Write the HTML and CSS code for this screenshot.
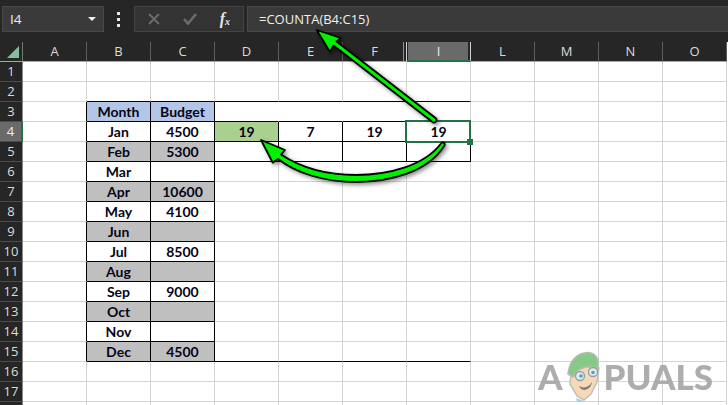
FILE: index.html
```html
<!DOCTYPE html>
<html lang="en">
<head>
<meta charset="utf-8">
<title>Excel COUNTA</title>
<link rel="stylesheet" href="styles.css">
</head>
<body>
<div class="app">
  <div class="fbar">
    <div class="namebox"><span>I4</span><i class="caret"></i></div>
    <div class="kebab"><i></i><i></i><i></i></div>
    <div class="btns">
      <svg class="ico" width="14" height="14" viewBox="0 0 14 14"><path d="M2 2L12 12M12 2L2 12" stroke="#6b6b6b" stroke-width="2" fill="none"/></svg>
      <svg class="ico" width="16" height="14" viewBox="0 0 16 14"><path d="M2 7L6 11.500L14 2" stroke="#6b6b6b" stroke-width="2.600" fill="none"/></svg>
      <span class="fx">f<sub>x</sub></span>
    </div>
    <div class="formula">=COUNTA(B4:C15)</div>
  </div>
  <div class="sheet">
    <div class="ch corner"><svg width="12" height="12" viewBox="0 0 12 12"><path d="M12 0V12H0Z" fill="#86bd9f"/></svg></div>
    <div class="ch">A</div><div class="ch">B</div><div class="ch">C</div><div class="ch">D</div><div class="ch">E</div><div class="ch before">F</div><div class="ch sel">I</div><div class="ch">L</div><div class="ch">M</div><div class="ch">N</div><div class="ch">O</div>

    <div class="rh">1</div><div class="c"></div><div class="c"></div><div class="c"></div><div class="c"></div><div class="c"></div><div class="c"></div><div class="c"></div><div class="c"></div><div class="c"></div><div class="c"></div><div class="c"></div>
    <div class="rh">2</div><div class="c"></div><div class="c bb"></div><div class="c bb"></div><div class="c bb"></div><div class="c bb"></div><div class="c bb"></div><div class="c bb"></div><div class="c"></div><div class="c"></div><div class="c"></div><div class="c"></div>
    <div class="rh">3</div><div class="c br"></div><div class="c t blue">Month</div><div class="c t blue">Budget</div><div class="c bb nr"></div><div class="c bb nr"></div><div class="c bb nr"></div><div class="c bb"></div><div class="c"></div><div class="c"></div><div class="c"></div><div class="c"></div>
    <div class="rh on">4</div><div class="c br"></div><div class="c t">Jan</div><div class="c t">4500</div><div class="c t green">19</div><div class="c t">7</div><div class="c t">19</div><div class="c t">19</div><div class="c"></div><div class="c"></div><div class="c"></div><div class="c"></div>
    <div class="rh">5</div><div class="c br"></div><div class="c t grey">Feb</div><div class="c t grey">5300</div><div class="c t"></div><div class="c t"></div><div class="c t"></div><div class="c t"></div><div class="c"></div><div class="c"></div><div class="c"></div><div class="c"></div>
    <div class="rh">6</div><div class="c br"></div><div class="c t">Mar</div><div class="c t"></div><div class="c"></div><div class="c"></div><div class="c"></div><div class="c"></div><div class="c"></div><div class="c"></div><div class="c"></div><div class="c"></div>
    <div class="rh">7</div><div class="c br"></div><div class="c t grey">Apr</div><div class="c t grey">10600</div><div class="c"></div><div class="c"></div><div class="c"></div><div class="c"></div><div class="c"></div><div class="c"></div><div class="c"></div><div class="c"></div>
    <div class="rh">8</div><div class="c br"></div><div class="c t">May</div><div class="c t">4100</div><div class="c"></div><div class="c"></div><div class="c"></div><div class="c"></div><div class="c"></div><div class="c"></div><div class="c"></div><div class="c"></div>
    <div class="rh">9</div><div class="c br"></div><div class="c t grey">Jun</div><div class="c t grey"></div><div class="c"></div><div class="c"></div><div class="c"></div><div class="c"></div><div class="c"></div><div class="c"></div><div class="c"></div><div class="c"></div>
    <div class="rh">10</div><div class="c br"></div><div class="c t">Jul</div><div class="c t">8500</div><div class="c"></div><div class="c"></div><div class="c"></div><div class="c"></div><div class="c"></div><div class="c"></div><div class="c"></div><div class="c"></div>
    <div class="rh">11</div><div class="c br"></div><div class="c t grey">Aug</div><div class="c t grey"></div><div class="c"></div><div class="c"></div><div class="c"></div><div class="c"></div><div class="c"></div><div class="c"></div><div class="c"></div><div class="c"></div>
    <div class="rh">12</div><div class="c br"></div><div class="c t">Sep</div><div class="c t">9000</div><div class="c"></div><div class="c"></div><div class="c"></div><div class="c"></div><div class="c"></div><div class="c"></div><div class="c"></div><div class="c"></div>
    <div class="rh">13</div><div class="c br"></div><div class="c t grey">Oct</div><div class="c t grey"></div><div class="c"></div><div class="c"></div><div class="c"></div><div class="c"></div><div class="c"></div><div class="c"></div><div class="c"></div><div class="c"></div>
    <div class="rh">14</div><div class="c br"></div><div class="c t">Nov</div><div class="c t"></div><div class="c"></div><div class="c"></div><div class="c"></div><div class="c"></div><div class="c"></div><div class="c"></div><div class="c"></div><div class="c"></div>
    <div class="rh">15</div><div class="c br"></div><div class="c t grey">Dec</div><div class="c t grey">4500</div><div class="c bb"></div><div class="c bb"></div><div class="c bb"></div><div class="c bb"></div><div class="c"></div><div class="c"></div><div class="c"></div><div class="c"></div>
    <div class="rh">16</div><div class="c"></div><div class="c"></div><div class="c"></div><div class="c"></div><div class="c"></div><div class="c"></div><div class="c"></div><div class="c"></div><div class="c"></div><div class="c"></div><div class="c"></div>
    <div class="rh">17</div><div class="c"></div><div class="c"></div><div class="c"></div><div class="c"></div><div class="c"></div><div class="c"></div><div class="c"></div><div class="c"></div><div class="c"></div><div class="c"></div><div class="c"></div>
    <div class="rh"></div><div class="c"></div><div class="c"></div><div class="c"></div><div class="c"></div><div class="c"></div><div class="c"></div><div class="c"></div><div class="c"></div><div class="c"></div><div class="c"></div><div class="c"></div>
  </div>

  <div class="cursor"><i class="handle"></i></div>

  <div class="logo">
    <span class="la">A</span>
    <svg class="mascot" width="40" height="52" viewBox="0 0 40 52">
      <path d="M7 22L6 34L13 46L20 50L27 44L33 32L35 18L20 16Z" fill="#f8d8b4" stroke="#bdbdbd" stroke-width="1.500"/>
      <path d="M4 24C5 14 10 5 20 3C27 1 33 5 34 11L34 19L28 17L21 17L14 20L9 27Z" fill="#7fc87f" stroke="#b5b5b5" stroke-width="1.500"/>
      <circle cx="16" cy="26" r="4.500" fill="#d8ecf4" stroke="#8c9aa0" stroke-width="1.300"/>
      <circle cx="29" cy="22" r="4.500" fill="#d8ecf4" stroke="#8c9aa0" stroke-width="1.300"/>
      <circle cx="17" cy="26" r="1.800" fill="#5b98b5"/>
      <circle cx="29" cy="22.500" r="1.800" fill="#5b98b5"/>
      <path d="M15 36C20 39 25 37 28 32C27 40 18 43 15 36Z" fill="#777"/>
      <path d="M12 48L20 51L17 52L13 52Z" fill="#9fd0e6"/>
    </svg>
    <span class="lp">PUALS</span>
  </div>

  <svg class="arrows" width="728" height="405" viewBox="0 0 728 405">
    <defs><filter id="sh" x="-20%" y="-20%" width="140%" height="140%"><feDropShadow dx="2" dy="2" stdDeviation="2" flood-color="#000" flood-opacity=".45"/></filter></defs>
    <g filter="url(#sh)" stroke="#000" stroke-width="1.800" stroke-linejoin="round">
      <path d="M316.700 30L340.700 38L336.500 41.500L435.500 118A2.500 2.500 0 0 1 432.500 122L333.500 45.500L330 52Z" fill="#00f000"/>
      <path d="M261 140L285 150L281 154.500C303 169 327 175 356 175C388 175 424 166 441 143.500A2 2 0 0 1 444.500 145.500C428 172 390 182 356 182C324 182 296 173 278 159L272.700 162.700Z" fill="#00f000"/>
    </g>
  </svg>
</div>
</body>
</html>
```
FILE: styles.css
```css
* { box-sizing: border-box; }
html, body { margin: 0; padding: 0; width: 728px; height: 405px; overflow: hidden; }
.app { position: relative; width: 728px; height: 405px; background: #262626; font-family: "Open Sans", "Noto Sans", sans-serif; overflow: hidden; }

.fbar { height: 42px; padding: 6px 0 0 2px; display: flex; align-items: flex-start; }
.namebox { width: 102px; height: 26px; background: #3a3a3a; border: 1px solid #484848; color: #f0f0f0; font-size: 13.500px; display: flex; align-items: center; justify-content: space-between; padding: 0 7px 0 7px; }
.caret { width: 0; height: 0; border-left: 4px solid transparent; border-right: 4px solid transparent; border-top: 4px solid #f0f0f0; }
.kebab { width: 30px; height: 26px; display: flex; flex-direction: column; align-items: center; justify-content: center; gap: 3px; padding-right: 1px; }
.kebab i { width: 3px; height: 3px; background: #e8e8e8; }
.btns { width: 110px; height: 26px; background: #333; border: 1px solid #444; display: flex; align-items: center; justify-content: space-between; padding: 0 13px 0 12px; }
.fx { font-family: "Liberation Serif", serif; font-style: italic; font-weight: 700; font-size: 16px; color: #e6e6e6; line-height: 1; }
.fx sub { font-size: 10px; vertical-align: -1px; line-height: 0; }
.formula { flex: 1; height: 26px; margin-left: 3px; background: #3a3a3a; border-top: 1px solid #484848; border-bottom: 1px solid #484848; border-left: 1px solid #484848; color: #f0f0f0; font-size: 13px; line-height: 24px; padding-left: 11px; }

.sheet { display: grid; grid-template-columns: 23px repeat(11, 64px); grid-auto-rows: 20px; background: #fff; height: 363px; color: #000; }
.ch { background: #262626; color: #dcdcdc; font-size: 13px; text-align: center; line-height: 18px; border-right: 1px solid #5c5c5c; border-bottom: 1px solid #a8a8a8; }
.corner { display: flex; align-items: flex-end; justify-content: flex-end; padding: 0 3px 3px 0; border-right-color: #777; }
.before { border-right: 1px solid #cfcfcf; box-shadow: inset -2px 0 0 #262626, inset -3px 0 0 #8f8f8f; }
.sel { background: #6a6a6a; color: #eee; border-right: 1px solid #cfcfcf; border-bottom: 2px solid #217346; box-shadow: inset 1px 0 0 #262626, inset -2px 0 0 #262626; }
.rh { background: #262626; color: #dcdcdc; font-size: 13px; line-height: 19px; text-align: center; border-right: 1px solid #8a8a8a; border-bottom: 1px solid #4c4c4c; }
.on { background: #6a6a6a; color: #eee; border-right: 2px solid #217346; }
.c { border-right: 1px solid #d4d4d4; border-bottom: 1px solid #d4d4d4; }
.br { border-right-color: #000; }
.bb { border-bottom-color: #000; }
.nr { border-right-color: transparent; }
.t { border-right-color: #000; border-bottom-color: #000; font-family: "Lato", "Open Sans", sans-serif; font-weight: 700; font-size: 14px; line-height: 19px; text-align: center; color: #05051a; }
.blue { background: #b4c6e7; }
.grey { background: #bfbfbf; }
.green { background: #a9d08e; }

.cursor { position: absolute; left: 405px; top: 120px; width: 66px; height: 23px; border: 2px solid #217346; }
.handle { position: absolute; right: -4px; bottom: -4px; width: 6px; height: 6px; background: #217346; }

.logo { position: absolute; left: 538px; top: 345px; width: 190px; height: 55px; display: flex; align-items: flex-end; color: #a9a9a9; filter: blur(.6px); opacity: .95; font-family: "Lato", sans-serif; font-weight: 900; font-size: 35px; line-height: 1; }
.la, .lp { display: block; padding-bottom: 6px; }
.mascot { margin: 0 0 -2px 1px; flex: none; }
.lp { margin-left: 0; }
.arrows { position: absolute; left: 0; top: 0; pointer-events: none; }
```
